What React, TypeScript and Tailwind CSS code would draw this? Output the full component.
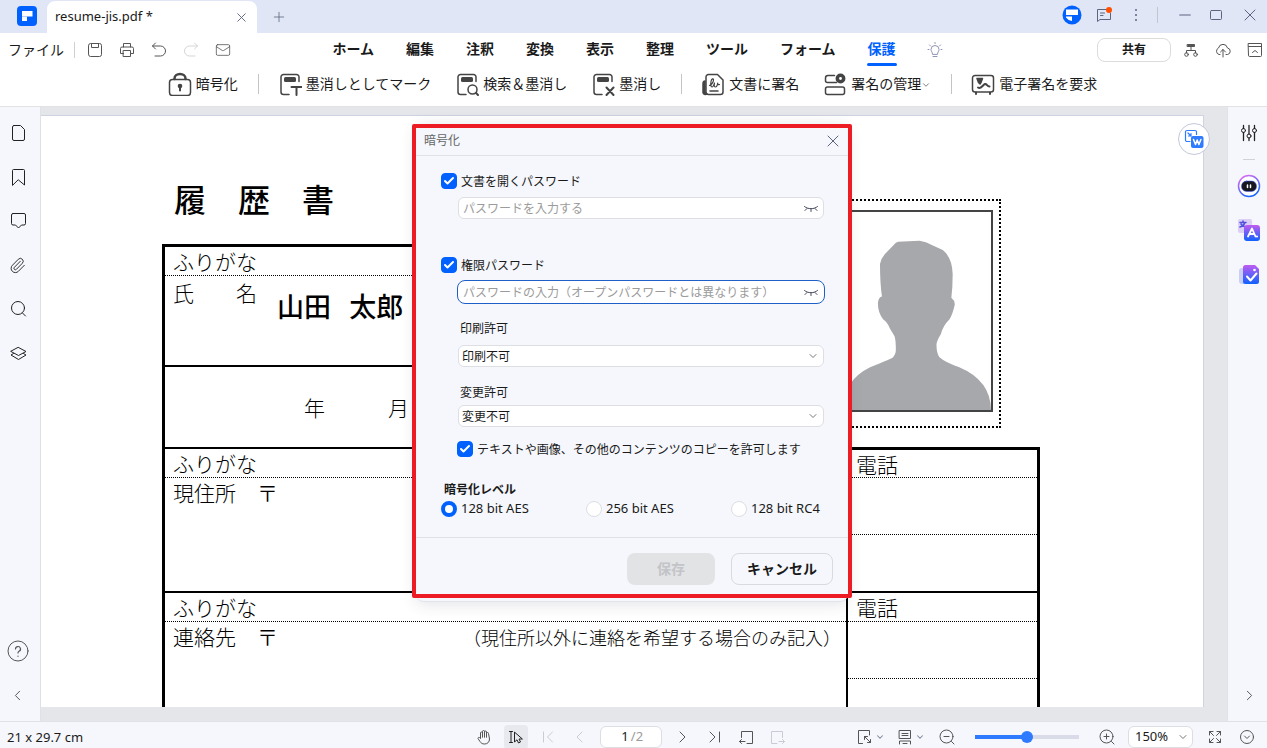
import React, { useState } from 'react';
import { Check, ChevronDown, ChevronLeft, ChevronRight, Mail, Minus, Paperclip, Plus, X } from 'lucide-react';

const menus = ['ホーム', '編集', '注釈', '変換', '表示', '整理', 'ツール', 'フォーム', '保護'];

function Icon({ size = 16, children, className = '' }: { size?: number; children: React.ReactNode; className?: string }) {
  return (
    <svg
      width={size}
      height={size}
      viewBox={`0 0 ${size} ${size}`}
      fill="none"
      stroke="currentColor"
      strokeWidth="1"
      strokeLinecap="round"
      strokeLinejoin="round"
      className={`shrink-0 ${className}`}
    >
      {children}
    </svg>
  );
}

function IconButton({ label, children, className = '' }: { label: string; children: React.ReactNode; className?: string }) {
  return (
    <button type="button" aria-label={label} className={`flex shrink-0 items-center justify-center ${className}`}>
      {children}
    </button>
  );
}

function TitleBar() {
  return (
    <header className="flex h-[33px] shrink-0 items-center bg-[#e0e6f5] pr-[7px] pl-4 text-[#5c6480]">
      <svg width="21" height="21" viewBox="0 0 21 21" className="shrink-0">
        <rect x="1" y="0" width="20" height="20" rx="4" fill="#0061ff" />
        <path d="M6 5h10.500v5.500H11V15H6z" fill="#fff" />
        <path d="M6 10.500h5" stroke="#b9d2ff" />
      </svg>
      <div className="ml-[10px] flex h-8 w-[210px] items-center justify-between self-end rounded-t-lg bg-white px-2">
        <span className="font-['Noto_Sans',sans-serif] text-[13px] text-[#1a1a1a]">resume-jis.pdf *</span>
        <IconButton label="タブを閉じる" className="size-4">
          <X size={15} strokeWidth={1.500} />
        </IconButton>
      </div>
      <IconButton label="新しいタブ" className="ml-[14px] size-4">
        <Plus size={18} strokeWidth={1.200} />
      </IconButton>

      <div className="ml-auto flex items-center pb-1">
        <IconButton label="アカウント">
          <Icon size={20}>
            <circle cx="10" cy="10" r="9.500" fill="#0061ff" stroke="none" />
            <path d="M4 4.500h12v5.500H4zM4 11.500h6V16a8 8 0 0 1-6-3.500z" fill="#fff" stroke="none" />
          </Icon>
        </IconButton>
        <IconButton label="メッセージ" className="ml-[14px]">
          <Icon>
            <path d="M11 2.500H1.500v12L4 12.500h10.500V6M4.500 6h4M4.500 8.500h2.500" />
            <circle cx="13" cy="3" r="3" fill="#ff5000" stroke="none" />
          </Icon>
        </IconButton>
        <IconButton label="その他" className="ml-4">
          <Icon>
            <g fill="currentColor" stroke="none">
              <circle cx="8" cy="3" r="1" />
              <circle cx="8" cy="8" r="1" />
              <circle cx="8" cy="13" r="1" />
            </g>
          </Icon>
        </IconButton>
        <span className="ml-[13px] h-4 w-px bg-[#c3c6d0]" />
        <IconButton label="最小化" className="ml-[18px]">
          <Minus size={18} strokeWidth={1.500} />
        </IconButton>
        <IconButton label="最大化" className="ml-[14px]">
          <Icon>
            <rect x="2.500" y="3.500" width="11" height="9" rx="1" />
          </Icon>
        </IconButton>
        <IconButton label="閉じる" className="ml-4">
          <X size={20} strokeWidth={1.200} />
        </IconButton>
      </div>
    </header>
  );
}

function MenuBar() {
  return (
    <div className="flex h-[33px] shrink-0 items-center bg-white pl-2 text-sm text-[#1a1a1a]">
      <div className="flex flex-1 items-center text-[#555]">
        <button type="button" className="pb-0.5 text-[#1a1a1a]">ファイル</button>
        <span className="ml-[10px] h-4 w-px bg-[#d0d0d0]" />
        <div className="ml-3 flex gap-4">
          <IconButton label="保存">
            <Icon>
              <path d="M1.500 3.500a2 2 0 0 1 2-2h9a2 2 0 0 1 2 2v9a2 2 0 0 1-2 2h-9a2 2 0 0 1-2-2zM4.500 1.500v4h7v-4" />
            </Icon>
          </IconButton>
          <IconButton label="印刷">
            <Icon>
              <path d="M4.500 5V1.500h7V5M4.500 11.500h-3v-5a1.500 1.500 0 0 1 1.500-1.500h10a1.500 1.500 0 0 1 1.500 1.500v5h-3M4.500 8.500h7v6h-7z" />
            </Icon>
          </IconButton>
          <IconButton label="元に戻す">
            <Icon>
              <path d="M4.500 1L1.500 4l3 3M1.500 4H9.500a5 5 0 0 1 0 10H4" />
            </Icon>
          </IconButton>
          <IconButton label="やり直す" className="text-[#d5d5d5]">
            <Icon>
              <path d="M11.500 1l3 3-3 3M14.500 4H6.500a5 5 0 0 0 0 10H12" />
            </Icon>
          </IconButton>
          <IconButton label="メール">
            <Mail size={16} strokeWidth={1.200} />
          </IconButton>
        </div>
      </div>

      <nav className="flex h-full gap-8 pl-[3px] font-bold">
        {menus.map((menu) => (
          <a key={menu} href="#" className={`flex h-full flex-col justify-between ${menu === '保護' ? 'text-[#0061ff]' : ''}`}>
            <span className="leading-[30px]">{menu}</span>
            {menu === '保護' && <span className="-mx-px mb-0.5 h-[3px] shrink-0 rounded-full bg-[#0061ff]" />}
          </a>
        ))}
        <IconButton label="ヒント" className="text-[#9095b5]">
          <Icon className="-mx-px">
            <path d="M5.500 12c0-2-1.500-2.500-1.500-4.500a4 4 0 0 1 8 0c0 2-1.500 2.500-1.500 4.500zM6 14.500h4M8 .5v1M1 7.500h1M14 7.500h1M2.500 3l1 1M13.500 3l-1 1" />
          </Icon>
        </IconButton>
      </nav>

      <div className="flex flex-1 items-center justify-end gap-4 pr-1 text-[#555]">
        <button type="button" className="-mr-1 h-6 w-[74px] rounded-lg border border-[#dcdcdc] pb-0.5 text-xs font-bold text-[#1a1a1a]">
          共有
        </button>
        <IconButton label="構成">
          <Icon>
            <path d="M4.500 2.500h7v2h-7z" fill="currentColor" />
            <path d="M8 5v3.500M3.500 11V8.500h9V11" />
            <circle cx="3.500" cy="12.500" r="1.800" />
            <circle cx="12.500" cy="12.500" r="1.800" />
          </Icon>
        </IconButton>
        <IconButton label="アップロード">
          <Icon>
            <path d="M5 12.500H4a3.500 3.500 0 0 1-.5-6.500 4.600 4.600 0 0 1 9 0 3.300 3.300 0 0 1 0 6.500H11M8 15V7.500M5.500 10L8 7.500l2.500 2.500" />
          </Icon>
        </IconButton>
        <IconButton label="折りたたむ">
          <Icon>
            <path d="M1.500 1.500h13v12a1 1 0 0 1-1 1h-11a1 1 0 0 1-1-1zM1.500 4.500h13M5.500 10.500L8 8.500l2.500 2" />
          </Icon>
        </IconButton>
      </div>
    </div>
  );
}

function Tool({ label, children, more }: { label: string; children: React.ReactNode; more?: boolean }) {
  return (
    <button type="button" className="flex shrink-0 items-center gap-1 text-sm whitespace-nowrap text-[#1a1a1a]">
      <svg
        width="24"
        height="24"
        viewBox="0 0 24 24"
        fill="none"
        stroke="#444"
        strokeWidth="1.500"
        strokeLinecap="round"
        strokeLinejoin="round"
        className="shrink-0"
      >
        {children}
      </svg>
      <span className="flex items-center pb-0.5">
        {label}
        {more && <ChevronDown size={10} strokeWidth={2} className="mt-1 text-[#666]" />}
      </span>
    </button>
  );
}

// page outline with the black bar, shared by the redaction tools
function RedactPage() {
  return (
    <>
      <path d="M11 22.500H5.500A2.500 2.500 0 0 1 3 20v-15A2.500 2.500 0 0 1 5.500 2.500h13A2.500 2.500 0 0 1 21 5V9.500" />
      <rect x="6" y="5" width="12" height="5" rx="1.500" fill="#444" stroke="none" />
    </>
  );
}

function ToolDivider() {
  return <span className="mr-[19px] ml-5 h-5 w-px shrink-0 bg-[#c4c4c4]" />;
}

function ToolBar() {
  return (
    <div className="flex h-[41px] shrink-0 items-center justify-center border-b border-[#e2e2e4] bg-white pr-0.5 pb-[5px]">
      <Tool label="暗号化">
        <rect x="1.500" y="7.500" width="21" height="16" rx="3" />
        <path d="M6.500 7v-.5a5.500 4.500 0 0 1 11 0V7" strokeWidth="2.500" />
        <circle cx="12" cy="14" r="2.300" fill="#444" stroke="none" />
        <path d="M12 14v4.500" strokeWidth="2" />
      </Tool>
      <ToolDivider />
      <div className="flex gap-6">
        <Tool label="墨消しとしてマーク">
          <RedactPage />
          <path d="M13.500 15h10M18.500 15v8" strokeWidth="2" />
        </Tool>
        <Tool label="検索＆墨消し">
          <RedactPage />
          <circle cx="17.500" cy="17.500" r="4.500" />
          <path d="M21 21l2 2" strokeWidth="2" />
        </Tool>
        <Tool label="墨消し">
          <RedactPage />
          <path d="M15.500 15.500l7 7.500M22.500 15.500l-7 7.500" strokeWidth="2" />
        </Tool>
      </div>
      <ToolDivider />
      <div className="flex gap-6">
        <Tool label="文書に署名">
          <path d="M4 9c-2 0-2 1-2 3v8.500a2.500 2.500 0 0 0 4 1.500c-1.500-.5-2-1-2-2z" fill="#444" />
          <path d="M5 5A2.500 2.500 0 0 1 7.500 2.500h9L22 8v12a2.500 2.500 0 0 1-2.500 2.500h-12A2.500 2.500 0 0 1 5 20zM9 19h8" />
          <path
            d="M8.500 13.500c1.500-.5 4-3 4-5.500 0-2-2-1.500-2.500 1.500s-.3 5.500 1 5.500 2-2.500 2.500-4c-.5 2-.5 4 .8 4s2.200-2.500 2.400-4c0 1.500.3 2 1.800 1.500"
            strokeWidth="1.200"
          />
        </Tool>
        <Tool label="署名の管理" more>
          <path d="M11.500 3.500H5A2.500 2.500 0 0 0 2.500 6v2.500a2 2 0 0 0 2 2h9" />
          <rect x="2.500" y="15" width="19" height="7.500" rx="2" />
          <circle cx="17.500" cy="6.500" r="3.200" strokeWidth="3.500" />
        </Tool>
      </div>
      <ToolDivider />
      <Tool label="電子署名を要求">
        <path d="M4 3.500h16A2.500 2.500 0 0 1 22.500 6v11.500a2.500 2.500 0 0 1-2.500 2.500H4a2.500 2.500 0 0 1-2.500-2.500V6A2.500 2.500 0 0 1 4 3.500z" />
        <path d="M6 6.500h5.500L10 10.500 9 12l-1.500-1.500z" fill="#444" />
        <path d="M7 15.500c3 2 4.500-2.500 7-3.500 2-.5 2 2.500 4.500 2.500M5 20.500v1.500M19 20.500v1.500" strokeWidth="2" />
      </Tool>
    </div>
  );
}

function LeftRail() {
  return (
    <aside className="flex w-[41px] shrink-0 flex-col items-center justify-between border-r border-[#dfe1e6] bg-[#f5f7fc] py-4 pr-[5px] text-[#222]">
      <div className="flex flex-col gap-6">
        <IconButton label="サムネイル" className="size-5">
          <Icon size={20}>
            <path d="M6 2.500h6.500l4 4V16a1.500 1.500 0 0 1-1.500 1.500H6A1.500 1.500 0 0 1 4.500 16V4A1.500 1.500 0 0 1 6 2.500z" />
          </Icon>
        </IconButton>
        <IconButton label="しおり" className="size-5">
          <Icon size={20}>
            <path d="M4.500 18V3.500a1 1 0 0 1 1-1h10a1 1 0 0 1 1 1V18l-6-5z" />
          </Icon>
        </IconButton>
        <IconButton label="注釈" className="size-5">
          <Icon size={20}>
            <path d="M5 2.500h11a1.500 1.500 0 0 1 1.500 1.500v8.500a1.500 1.500 0 0 1-1.500 1.500h-2.500L10.500 17l-3-3H5a1.500 1.500 0 0 1-1.500-1.500V4A1.500 1.500 0 0 1 5 2.500z" />
          </Icon>
        </IconButton>
        <IconButton label="添付" className="size-5">
          <Paperclip size={17} strokeWidth={1.300} />
        </IconButton>
        <IconButton label="検索" className="size-5">
          <Icon size={20}>
            <circle cx="10" cy="9" r="6.500" />
            <path d="M14.500 14l3 3" />
          </Icon>
        </IconButton>
        <IconButton label="レイヤー" className="size-5">
          <Icon size={20}>
            <path d="M10.500 4.500l7.500 4-7.500 4-7.500-4zM5.500 10.500L3 12l7.500 4.500L18 12l-2.500-1.500" />
          </Icon>
        </IconButton>
      </div>
      <div className="flex flex-col items-center gap-6 text-[#555]">
        <IconButton label="ヘルプ" className="size-5">
          <Icon size={22}>
            <circle cx="11" cy="11" r="10" />
            <path d="M8.500 9a2.500 2.500 0 1 1 3.500 2.300c-.8.400-1 .9-1 1.700M11 16v.3" strokeWidth="1.200" />
          </Icon>
        </IconButton>
        <IconButton label="パネルを閉じる" className="size-5">
          <ChevronLeft size={17} strokeWidth={1.400} />
        </IconButton>
      </div>
    </aside>
  );
}

function RightRail() {
  return (
    <aside className="flex w-10 shrink-0 flex-col items-center justify-between border-l border-[#e0e2e8] bg-[#f5f7fc] py-4 pl-[3px]">
      <svg width="0" height="0" className="h-0 w-0">
        <defs>
          <linearGradient id="ai" x1="0" y1="0" x2="0" y2="1">
            <stop offset="0" stopColor="#c05cf0" />
            <stop offset="1" stopColor="#0f62fe" />
          </linearGradient>
          <linearGradient id="ring" x1="0" y1="0" x2="0.500" y2="1">
            <stop offset="0" stopColor="#f06cf0" />
            <stop offset="1" stopColor="#1a66ff" />
          </linearGradient>
        </defs>
      </svg>
      <div className="flex flex-1 flex-col items-center">
        <IconButton label="プロパティ" className="size-5 text-[#222]">
          <Icon size={20}>
            <path d="M4.500 2.500v3M4.500 9.500v8M10 2.500v8.500M10 15v2.500M15.500 2.500v3M15.500 9.500v8" strokeWidth="1.300" />
            <circle cx="4.500" cy="7.500" r="2" />
            <circle cx="10" cy="13" r="2" />
            <circle cx="15.500" cy="7.500" r="2" />
          </Icon>
        </IconButton>
        <span className="mt-4 h-px w-3 bg-[#cfd2da]" />
        <IconButton label="AIアシスタント" className="mt-[14px] size-6">
          <Icon size={24}>
            <circle cx="12" cy="12" r="10.500" stroke="url(#ring)" strokeWidth="1.500" fill="#fff" />
            <rect x="4.500" y="7" width="15" height="10.500" rx="5" fill="#171720" stroke="#3c58ff" strokeWidth="0.500" />
            <path d="M10.500 11v2.500M13.500 11v2.500" stroke="#fff" strokeWidth="1.500" />
          </Icon>
        </IconButton>
        <IconButton label="翻訳" className="mt-5 size-6">
          <Icon size={24}>
            <rect x="1" y="1" width="14" height="14" rx="2" fill="#dccff5" stroke="none" />
            <path d="M3 4.500h6M6 3v1.500M8 4.500C7 7.500 5 8.500 3 9M4 6c1 1.500 2.500 2.500 4 2.500" stroke="#4f4fe0" strokeWidth="1.500" />
            <rect x="7" y="7" width="16" height="16" rx="3" fill="url(#ai)" stroke="none" />
            <path d="M11 18.500l4-8 3.500 8M12.500 16h4" stroke="#fff" strokeWidth="1.800" />
            <circle cx="20" cy="18.500" r="1.100" fill="#fff" stroke="none" />
          </Icon>
        </IconButton>
        <IconButton label="校正" className="mt-5 size-6">
          <Icon size={24}>
            <rect x="2" y="6" width="12" height="16" rx="3" fill="#c9cff5" stroke="none" />
            <path d="M8.500 3H18l4 4v12.500a2.500 2.500 0 0 1-2.500 2.500h-11A2.500 2.500 0 0 1 6 19.500v-14A2.500 2.500 0 0 1 8.500 3z" fill="url(#ai)" stroke="none" />
            <path d="M10 14.500l3.500 4 6-7" stroke="#fff" strokeWidth="2" />
            <circle cx="17.500" cy="8" r="1.300" fill="#fff" stroke="none" />
          </Icon>
        </IconButton>
      </div>
      <IconButton label="パネルを開く" className="size-5 text-[#555]">
        <ChevronRight size={17} strokeWidth={1.400} />
      </IconButton>
    </aside>
  );
}

function Photo() {
  return (
    <div className="mt-[83px] ml-[21px] h-[229px] w-[168px] shrink-0 border-2 border-dotted border-black px-1.5 pt-[9px]">
      <div className="h-[202px] border-2 border-[#444]">
        <svg viewBox="8 303 448 598" preserveAspectRatio="none" className="h-full w-full">
          <path
            d="M175 393L240 390Q262 394 280 404L310 418Q338 440 340 490Q340 530 336 562Q348 572 346 584Q340 612 330 628Q312 645 304 672Q290 695 291 705Q291 730 300 742Q318 758 360 772Q455 812 456 901H8Q8 812 90 772Q145 750 157 744Q168 735 168 720Q168 690 164 678L150 655Q142 635 130 628Q112 605 114 575Q116 560 126 558Q120 520 120 460Q122 445 135 430L168 396Z"
            fill="#a7a8ac"
          />
        </svg>
      </div>
    </div>
  );
}

function AddressRow({ label, note, heavy }: { label: string; note?: string; heavy?: boolean }) {
  return (
    <div className="flex h-36 shrink-0">
      <div className="flex flex-1 flex-col border-t-2 border-l-[3px] border-black">
        <div className="flex h-[29px] items-center border-b border-dotted border-black pl-2">ふりがな</div>
        <div className="flex justify-between pl-2">
          <span className="whitespace-pre">{label}　〒</span>
          {note && <span className="pr-[5px] text-lg leading-[30px]">{note}</span>}
        </div>
      </div>
      <div className={`w-[194px] border-r-[3px] border-l-2 border-black ${heavy ? 'border-t-[3px]' : 'border-t-2'}`}>
        <div className={`flex items-center border-b border-dotted border-black pl-2 ${heavy ? 'h-7' : 'h-[29px]'}`}>電話</div>
        <div className="h-[57px] border-b border-dotted border-black" />
      </div>
    </div>
  );
}

function Resume() {
  return (
    <main className="relative flex min-w-0 flex-1 flex-col bg-[#e5e6ea] pt-2 pr-[23px] pb-[14px]">
      <div className="min-h-0 flex-1 overflow-hidden border-t border-r border-[#cdd3e0] bg-white pl-[121px] text-[21px] leading-[28px] font-light text-black">
        <div className="flex w-[878px] flex-col">
          <div className="flex h-[331px] shrink-0">
            <div className="flex w-[650px] shrink-0 flex-col">
              <h1 className="h-[128px] pt-[58px] pl-3 text-[32px] leading-[48px] font-medium whitespace-pre">履　歴　書</h1>
              <div className="flex flex-1 flex-col border-t-[3px] border-r-2 border-l-[3px] border-black">
                <div className="flex h-[29px] items-center border-b border-dotted border-black pl-2">ふりがな</div>
                <div className="flex h-[89px] pl-2">
                  <span className="pt-0.5 whitespace-pre">氏　　名</span>
                  <span className="pt-2.5 pl-5 text-[27px] leading-[40px] font-medium whitespace-pre">山田   太郎</span>
                </div>
                <div className="flex flex-1 items-center border-t-2 border-black pl-[139px] whitespace-pre">年　　　月</div>
              </div>
            </div>
            <Photo />
          </div>
          <AddressRow label="現住所" heavy />
          <AddressRow label="連絡先" note="（現住所以外に連絡を希望する場合のみ記入）" />
        </div>
      </div>
      <button
        type="button"
        aria-label="Wordに変換"
        className="absolute top-4 right-[17px] flex size-8 items-center justify-center rounded-full border border-[#c3c8dc] bg-white"
      >
        <Icon size={20}>
          <path d="M6 12.500H3A1.500 1.500 0 0 1 1.500 11V3A1.500 1.500 0 0 1 3 1.500h8A1.500 1.500 0 0 1 12.500 3v2.500M4 4l3 3M7 4.500V7H4.500" stroke="#2f7bff" strokeWidth="1.200" />
          <rect x="7" y="7" width="12.500" height="12" rx="2" fill="#2f7bff" stroke="none" />
          <path d="M9.500 10.500l2 5 1.700-4.500 1.700 4.500 2-5" stroke="#fff" strokeWidth="1.500" />
        </Icon>
      </button>
    </main>
  );
}

function CheckField({ label, checked, onChange, className = '' }: { label: string; checked: boolean; onChange: (v: boolean) => void; className?: string }) {
  return (
    <label className={`flex h-4 items-center gap-1 ${className}`}>
      <span className="grid size-4 shrink-0 place-items-center">
        <input
          type="checkbox"
          checked={checked}
          onChange={(e) => onChange(e.target.checked)}
          className="col-start-1 row-start-1 size-4 appearance-none rounded border border-[#d4d6dc] bg-white checked:border-[#0061ff] checked:bg-[#0061ff]"
        />
        {checked && <Check size={12} strokeWidth={4} className="pointer-events-none col-start-1 row-start-1 text-white" />}
      </span>
      {label}
    </label>
  );
}

function PasswordField({ label, placeholder, focused, className = '' }: { label: string; placeholder: string; focused?: boolean; className?: string }) {
  return (
    <div
      className={`flex items-center border bg-white ${
        focused ? 'mr-[23px] ml-[41px] h-6 rounded-lg border-[#1f5fc8] px-[5px]' : 'mr-6 ml-[42px] h-[22px] rounded-md border-[#dddfe3] px-1'
      } ${className}`}
    >
      <input type="password" aria-label={label} placeholder={placeholder} className="min-w-0 flex-1 bg-transparent outline-none placeholder:text-[#9b9b9b]" />
      <IconButton label="パスワードを表示" className="text-[#44485c]">
        <Icon>
          <path d="M1.500 6.500C5 9.500 11 9.500 14.500 6.500M4 8.500l-2 2M12 8.500l2 2M8 9v2.500" />
        </Icon>
      </IconButton>
    </div>
  );
}

function SelectField({ id, label, options, gap }: { id: string; label: string; options: string[]; gap: string }) {
  return (
    <div className={`mr-6 ml-[42px] flex flex-col ${gap}`}>
      <label htmlFor={id} className="pl-0.5 leading-4">{label}</label>
      <div className="grid items-center">
        <select id={id} className="col-start-1 row-start-1 h-[22px] w-full appearance-none rounded-md border border-[#dddfe3] bg-white pl-[3px]">
          {options.map((option) => (
            <option key={option}>{option}</option>
          ))}
        </select>
        <ChevronDown size={12} strokeWidth={1.600} className="pointer-events-none col-start-1 row-start-1 mr-[5px] justify-self-end text-[#555]" />
      </div>
    </div>
  );
}

function EncryptDialog() {
  const [openPassword, setOpenPassword] = useState(true);
  const [permPassword, setPermPassword] = useState(true);
  const [allowCopy, setAllowCopy] = useState(true);
  const [level, setLevel] = useState('128 bit AES');

  return (
    <div className="pointer-events-none absolute inset-0 flex items-start justify-center pt-31 pr-[3px]">
      <div
        role="dialog"
        aria-labelledby="dialog-title"
        className="pointer-events-auto relative flex w-[432px] flex-col rounded-lg border-b border-[#e2e4ea] bg-[#f5f7fc] text-xs text-[#1a1a1a] shadow-[0_2px_16px_rgba(40,50,80,0.14)]"
      >
        <div className="flex h-8 items-center justify-between border-b border-[#dfe1e7] pr-[5px] pl-2">
          <h2 id="dialog-title" className="text-[#666]">暗号化</h2>
          <IconButton label="閉じる" className="pt-0.5 text-[#5c6480]">
            <X size={20} strokeWidth={1.200} />
          </IconButton>
        </div>

        <div className="flex flex-col pt-[17px] pb-5">
          <CheckField label="文書を開くパスワード" checked={openPassword} onChange={setOpenPassword} className="ml-[25px]" />
          <PasswordField label="文書を開くパスワード" placeholder="パスワードを入力する" className="mt-2" />
          <CheckField label="権限パスワード" checked={permPassword} onChange={setPermPassword} className="mt-[38px] ml-[25px]" />
          <PasswordField
            label="権限パスワード"
            placeholder="パスワードの入力（オープンパスワードとは異なります）"
            focused
            className="mt-[7px]"
          />
          <SelectField id="print" label="印刷許可" options={['印刷不可', '低解像度', '高解像度']} gap="mt-4 gap-[9px]" />
          <SelectField id="change" label="変更許可" options={['変更不可', '注釈の追加']} gap="mt-[17px] gap-[5px]" />
          <CheckField
            label="テキストや画像、その他のコンテンツのコピーを許可します"
            checked={allowCopy}
            onChange={setAllowCopy}
            className="mt-[14px] ml-[41px]"
          />
          <fieldset className="mt-6 ml-[25px]">
            <legend className="pl-[3px] leading-4 font-bold">暗号化レベル</legend>
            <div className="mt-1 flex font-['Noto_Sans',sans-serif] text-[13px]">
              {['128 bit AES', '256 bit AES', '128 bit RC4'].map((name) => (
                <label key={name} className="flex h-4 w-[145px] shrink-0 items-center gap-1 last:w-auto">
                  <input
                    type="radio"
                    name="level"
                    checked={level === name}
                    onChange={() => setLevel(name)}
                    className="size-4 appearance-none rounded-full border border-[#dcdee3] bg-white checked:border-4 checked:border-[#0061ff]"
                  />
                  {name}
                </label>
              ))}
            </div>
          </fieldset>
        </div>

        <div className="flex justify-end gap-4 border-t border-[#dfe1e7] pt-[15px] pr-[15px] pb-4 text-sm font-bold">
          <button type="button" disabled className="h-8 w-[88px] rounded-lg bg-[#e2e3e5] pb-[3px] text-[#c3c4c7]">
            保存
          </button>
          <button type="button" className="h-8 w-[102px] rounded-lg border border-[#d8dae0] pb-[3px]">
            キャンセル
          </button>
        </div>

        <span className="pointer-events-none absolute -inset-x-1 top-0 bottom-[3px] rounded-xs border-4 border-[#ed1c24]" />
      </div>
    </div>
  );
}

function StatusBar() {
  const [zoom, setZoom] = useState(50);

  return (
    <footer className="flex h-[27px] shrink-0 items-end border-t border-[#dfe1e6] bg-[#f5f7fc] px-[7px] font-['Noto_Sans',sans-serif] text-[13px] text-[#555]">
      <span className="flex-1 leading-[22px] text-[#1a1a1a]">21 x 29.7 cm</span>

      <div className="flex h-[22px] items-center gap-2">
        <IconButton label="手のひら" className="size-6">
          <Icon>
            <path d="M4.500 9V4a1 1 0 0 1 2 0v4M6.500 8V2.500a1 1 0 0 1 2 0V8M8.500 8V3a1 1 0 0 1 2 0v5M10.500 8V4.500a1 1 0 0 1 2 0l1 5.500c0 3-2 5-5 5-2.500 0-3.500-1-4.500-2.500L2 9.500a1 1 0 0 1 1.500-1l1 1" />
          </Icon>
        </IconButton>
        <IconButton label="選択" className="size-6 rounded bg-[#e7e9ef] text-[#222]">
          <Icon>
            <path d="M1.500 2.500h3M3 2.500v11M1.500 13.500h3M6.500 3.500v9.500l2.500-2.200 1.500 3.200 2-1-1.500-3h3z" />
          </Icon>
        </IconButton>
        <IconButton label="最初のページ" className="size-6 text-[#c9ccd4]">
          <Icon>
            <path d="M3.500 3v10M12.500 3l-5 5 5 5" />
          </Icon>
        </IconButton>
        <IconButton label="前のページ" className="size-6 text-[#c9ccd4]">
          <Icon>
            <path d="M10 3L5 8l5 5" />
          </Icon>
        </IconButton>
        <div className="flex h-[22px] w-[62px] items-center justify-center rounded-md border border-[#dcdee3] bg-white text-[#9b9b9b]">
          <input aria-label="ページ" defaultValue="1" className="w-3 bg-transparent text-center text-[#1a1a1a] outline-none" />
          <span>/2</span>
        </div>
        <IconButton label="次のページ" className="size-6">
          <Icon>
            <path d="M6 3l5 5-5 5" />
          </Icon>
        </IconButton>
        <IconButton label="最後のページ" className="size-6">
          <Icon>
            <path d="M13.500 3v10M4 3l5 5-5 5" />
          </Icon>
        </IconButton>
        <IconButton label="前の表示" className="size-6">
          <Icon>
            <path d="M3.500 8.500V2.500h11v12H9M7 12.500H1.500M3.500 10.500l-2 2 2 2" />
          </Icon>
        </IconButton>
        <IconButton label="次の表示" className="size-6 text-[#c9ccd4]">
          <Icon>
            <path d="M12.500 8.500V2.500h-11v12H7M9 12.500h5.500M12.500 10.500l2 2-2 2" />
          </Icon>
        </IconButton>
      </div>

      <div className="flex h-[22px] flex-1 items-center justify-end pr-[5px]">
        <IconButton label="ページに合わせる" className="gap-0.5">
          <Icon>
            <path d="M5.500 14.500h-4v-13h11V6M7.500 7.500l6 6M7.500 10.500v-3h3M13.500 10.500v3h-3" />
          </Icon>
          <ChevronDown size={10} strokeWidth={2.500} className="text-[#7a7f95]" />
        </IconButton>
        <IconButton label="表示モード" className="ml-3 gap-0.5">
          <Icon>
            <path d="M2.500 1.500h11v8h-11zM5 4.500h6M5 6.500h6M2.500 15v-3h11v3M6 14.500h4" />
          </Icon>
          <ChevronDown size={10} strokeWidth={2.500} className="text-[#7a7f95]" />
        </IconButton>
        <IconButton label="縮小" className="ml-[14px]">
          <Icon>
            <circle cx="7.500" cy="7.500" r="6.500" />
            <path d="M12.500 12.500l2.500 2.500M5 7.500h5" />
          </Icon>
        </IconButton>
        <input
          type="range"
          aria-label="ズーム"
          value={zoom}
          onChange={(e) => setZoom(Number(e.target.value))}
          style={{ '--zoom': `${zoom}%` } as React.CSSProperties}
          className="ml-5 h-3 w-[104px] appearance-none bg-transparent [&::-webkit-slider-runnable-track]:h-1 [&::-webkit-slider-runnable-track]:bg-[linear-gradient(to_right,#2f7bff_var(--zoom),#d9dce8_var(--zoom))] [&::-webkit-slider-thumb]:-mt-1 [&::-webkit-slider-thumb]:size-3 [&::-webkit-slider-thumb]:appearance-none [&::-webkit-slider-thumb]:rounded-full [&::-webkit-slider-thumb]:bg-[#2f7bff]"
        />
        <IconButton label="拡大" className="ml-5">
          <Icon>
            <circle cx="7.500" cy="7.500" r="6.500" />
            <path d="M12.500 12.500l2.500 2.500M5 7.500h5M7.500 5v5" />
          </Icon>
        </IconButton>
        <div className="ml-[13px] grid w-[65px] items-center">
          <select aria-label="倍率" defaultValue="150%" className="col-start-1 row-start-1 h-[22px] w-full appearance-none rounded-md border border-[#dcdee3] bg-white pl-1.5 text-[#1a1a1a]">
            <option>100%</option>
            <option>150%</option>
            <option>200%</option>
          </select>
          <ChevronDown size={12} strokeWidth={1.600} className="pointer-events-none col-start-1 row-start-1 mr-1 justify-self-end" />
        </div>
        <IconButton label="全画面" className="ml-[14px]">
          <Icon>
            <path d="M2.500 6V2.500H6M2.500 2.500l4 4M10 2.500h3.500V6M13.500 2.500l-4 4M2.500 10v3.500H6M2.500 13.500l4-4M13.500 10v3.500H10M13.500 13.500l-4-4" />
          </Icon>
        </IconButton>
        <IconButton label="詳細" className="ml-4">
          <Icon>
            <circle cx="8" cy="8" r="6.500" />
            <path d="M5.500 7L8 9.500 10.500 7" />
          </Icon>
        </IconButton>
      </div>
    </footer>
  );
}

function App() {
  return (
    <div className="relative flex h-screen flex-col overflow-hidden font-['Noto_Sans_CJK_JP',sans-serif]">
      <TitleBar />
      <MenuBar />
      <ToolBar />
      <div className="flex min-h-0 flex-1">
        <LeftRail />
        <Resume />
        <RightRail />
      </div>
      <StatusBar />
      <EncryptDialog />
    </div>
  );
}

export default App;
